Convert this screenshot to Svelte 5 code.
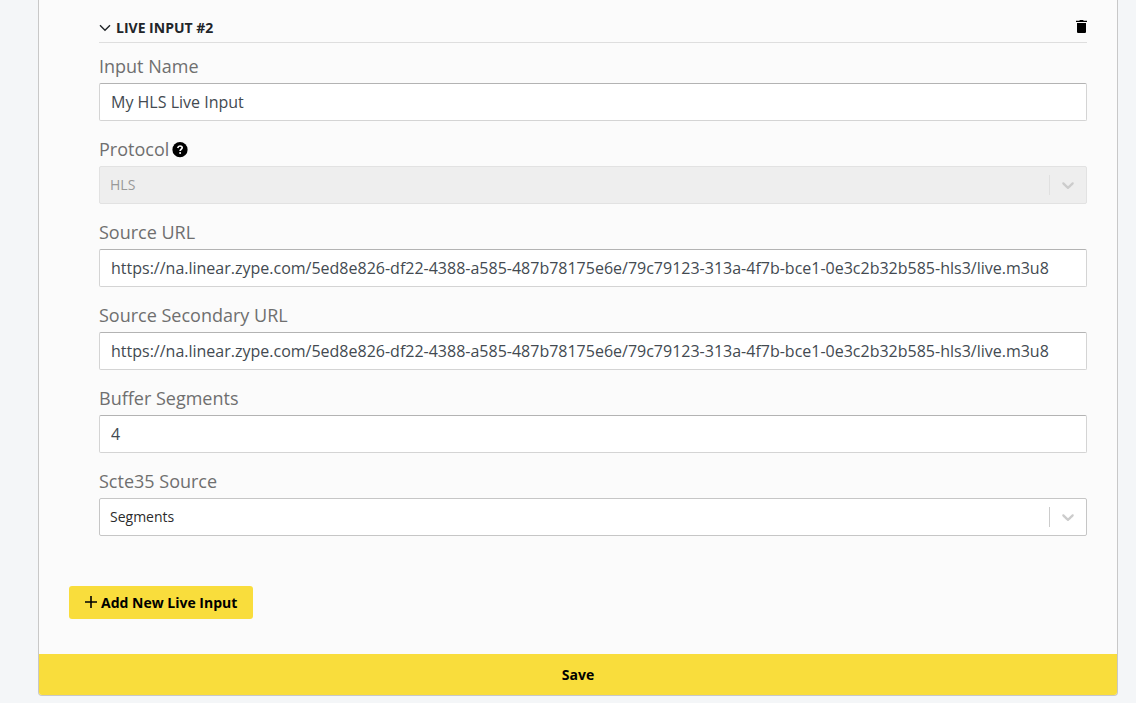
<script lang="ts">
  const SOURCES = ["Segments", "Manifest"];

  let expanded = $state(true);
  let name = $state("My HLS Live Input");
  let protocol = $state("HLS");
  let sourceUrl = $state(
    "https://na.linear.zype.com/5ed8e826-df22-4388-a585-487b78175e6e/79c79123-313a-4f7b-bce1-0e3c2b32b585-hls3/live.m3u8"
  );
  let secondaryUrl = $state(
    "https://na.linear.zype.com/5ed8e826-df22-4388-a585-487b78175e6e/79c79123-313a-4f7b-bce1-0e3c2b32b585-hls3/live.m3u8"
  );
  let bufferSegments = $state("4");
  let scteSource = $state("Segments");
</script>

{#snippet indicator()}
  <span class="select__indicator" aria-hidden="true">
    <svg width="20" height="20" viewBox="0 0 20 20">
      <path
        fill="currentColor"
        d="M4.516 7.548c0.436-0.446 1.043-0.481 1.576 0l3.908 3.747 3.908-3.747c0.533-0.481 1.141-0.446 1.574 0 0.436 0.445 0.408 1.197 0 1.615-0.406 0.418-4.695 4.502-4.695 4.502-0.217 0.223-0.502 0.335-0.787 0.335s-0.57-0.112-0.789-0.335c0 0-4.287-4.084-4.695-4.502s-0.436-1.17 0-1.615z"
      />
    </svg>
  </span>
{/snippet}

<form class="card" onsubmit={(e) => e.preventDefault()}>
  <section class="live-input">
    <header class="live-input__header">
      <button
        type="button"
        class="live-input__toggle"
        aria-expanded={expanded}
        onclick={() => (expanded = !expanded)}
      >
        <svg width="12" height="12" viewBox="0 0 12 12" aria-hidden="true">
          <path d="M1 3.2 6 8.2 11 3.2" fill="none" stroke="currentColor" stroke-width="1.4" />
        </svg>
        LIVE INPUT #2
      </button>
      <button type="button" class="live-input__remove" aria-label="Remove">
        <svg width="11" height="13" viewBox="0 0 11 13" aria-hidden="true">
          <path d="M0 .8h3.2L4 0h3l.8.8H11V2H0zM1 2.9h9v9q0 1.100-1.100 1.100H2.100Q1 13 1 11.900z" />
        </svg>
      </button>
    </header>

    {#if expanded}
      <div class="field">
        <label for="name">Input Name</label>
        <input id="name" type="text" bind:value={name} />
      </div>
      <div class="field">
        <label for="protocol">
          Protocol
          <svg width="16" height="16" viewBox="0 0 16 16" aria-hidden="true">
            <circle cx="8" cy="7.7" r="7.6" />
            <path
              d="M5.7 6Q6.2 4 8 4 10.2 4 10.2 5.8C10.2 7.3 8.1 7.2 8.1 9"
              fill="none"
              stroke="#fff"
              stroke-width="1.7"
            />
            <circle cx="8.1" cy="10.9" r="1" fill="#fff" />
          </svg>
        </label>
        <div class="select select--disabled">
          <select id="protocol" bind:value={protocol} disabled>
            <option>HLS</option>
          </select>
          {@render indicator()}
        </div>
      </div>
      <div class="field">
        <label for="source-url">Source URL</label>
        <input id="source-url" type="text" bind:value={sourceUrl} />
      </div>
      <div class="field">
        <label for="secondary-url">Source Secondary URL</label>
        <input id="secondary-url" type="text" bind:value={secondaryUrl} />
      </div>
      <div class="field">
        <label for="buffer">Buffer Segments</label>
        <input id="buffer" type="text" inputmode="numeric" bind:value={bufferSegments} />
      </div>
      <div class="field">
        <label for="scte">Scte35 Source</label>
        <div class="select">
          <select id="scte" bind:value={scteSource}>
            {#each SOURCES as source (source)}
              <option>{source}</option>
            {/each}
          </select>
          {@render indicator()}
        </div>
      </div>
    {/if}
  </section>

  <button type="button" class="add">
    <svg width="12" height="14" viewBox="0 0 12 14" aria-hidden="true">
      <path d="M6 0v12M0 6h12" stroke="currentColor" stroke-width="1.6" />
    </svg>
    Add New Live Input
  </button>

  <button type="submit" class="save">Save</button>
</form>

<style>
  :global(body) {
    background: #f4f6f8;
    color: #212529;
    font-family: "Open Sans", "Noto Sans", sans-serif;
  }

  button,
  input,
  select {
    box-sizing: border-box;
    margin: 0;
    font-family: inherit;
  }

  button {
    border: 0;
    color: #000;
    cursor: pointer;
  }

  .card {
    display: flex;
    flex-direction: column;
    margin: 0 18px 0 38px;
    border: 1px solid #c8c8c8;
    border-top: 0;
    border-radius: 0 0 4px 4px;
    background: #fbfbfb;
    overflow: hidden;
  }

  .live-input {
    padding: 13px 30px 0 60px;
  }

  .live-input__header {
    display: flex;
    align-items: center;
    justify-content: space-between;
    height: 29px;
    margin-bottom: 11px;
    border-bottom: 1px solid #dedede;
  }

  .live-input__toggle {
    display: flex;
    align-items: center;
    gap: 5px;
    padding: 0;
    background: none;
    color: #212529;
    font-size: 14px;
    font-weight: 700;
    line-height: 20px;
  }

  .live-input__remove {
    display: flex;
    padding: 0 0 3px;
    background: none;
  }

  .field {
    margin-bottom: 16px;
  }

  .field label {
    display: flex;
    align-items: center;
    gap: 3px;
    margin-bottom: 4px;
    color: #6f6f6f;
    font-size: 18px;
    line-height: 25px;
  }

  .field label svg {
    fill: #000;
  }

  .field input {
    display: block;
    width: 100%;
    height: 38px;
    padding: 0 11px;
    border: 1px solid #d4d4d4;
    border-top-color: #b3b3b3;
    border-radius: 2px;
    background: #fff;
    color: #434a51;
    font-size: 16px;
  }

  .select {
    position: relative;
  }

  .select select {
    display: block;
    width: 100%;
    height: 38px;
    padding: 0 48px 2px 10px;
    border: 1px solid #c6c6c6;
    border-radius: 2px;
    background: #fff;
    color: #2b2b2b;
    font-size: 14px;
    appearance: none;
  }

  .select__indicator {
    position: absolute;
    top: 9px;
    right: 1px;
    display: flex;
    padding: 0 8px;
    border-left: 1px solid #ccc;
    color: #ccc;
    pointer-events: none;
  }

  .select--disabled select {
    border-color: #e2e2e2;
    background: #eee;
    color: #999;
    opacity: 1;
  }

  .select--disabled .select__indicator {
    border-color: #e0e0e0;
  }

  .add {
    display: flex;
    align-items: center;
    align-self: flex-start;
    gap: 4px;
    height: 33px;
    margin: 34px 30px 35px;
    padding: 0 16px;
    border-radius: 3px;
    background: #f9dd3c;
    font-size: 14px;
    font-weight: 700;
  }

  .save {
    height: 41px;
    background: #f9dd3c;
    font-size: 14px;
    font-weight: 700;
  }
</style>
